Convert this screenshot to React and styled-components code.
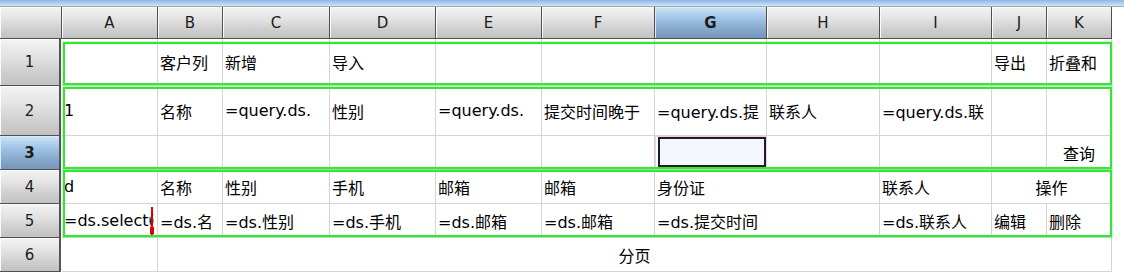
import React from 'react';
import styled, { createGlobalStyle } from 'styled-components';

const GlobalStyle = createGlobalStyle`
  html, body { margin: 0; padding: 0; background: #ffffff; }
  body { font-family: "DejaVu Sans", "Noto Sans CJK SC", sans-serif; }
  *, *::before, *::after { box-sizing: border-box; }
`;

const COLS = [
  { key: 'A', w: 96 },
  { key: 'B', w: 65 },
  { key: 'C', w: 107 },
  { key: 'D', w: 106 },
  { key: 'E', w: 106 },
  { key: 'F', w: 113 },
  { key: 'G', w: 112 },
  { key: 'H', w: 113 },
  { key: 'I', w: 112 },
  { key: 'J', w: 55 },
  { key: 'K', w: 65 },
];

const ROW_HEIGHTS = [47, 50, 34, 34, 34, 34];

const ROWS = [
  [
    { t: '' }, { t: '客户列' }, { t: '新增' }, { t: '导入' }, { t: '' }, { t: '' },
    { t: '' }, { t: '' }, { t: '' }, { t: '导出' }, { t: '折叠和' },
  ],
  [
    { t: '1' }, { t: '名称' }, { t: '=query.ds.' }, { t: '性别' }, { t: '=query.ds.' },
    { t: '提交时间晚于' }, { t: '=query.ds.提' }, { t: '联系人' }, { t: '=query.ds.联' },
    { t: '' }, { t: '' },
  ],
  [
    { t: '' }, { t: '' }, { t: '' }, { t: '' }, { t: '' }, { t: '' },
    { t: '', selected: true }, { t: '' }, { t: '' }, { t: '' }, { t: '查询', align: 'center' },
  ],
  [
    { t: 'd' }, { t: '名称' }, { t: '性别' }, { t: '手机' }, { t: '邮箱' }, { t: '邮箱' },
    { t: '身份证', span: 2 }, { t: '联系人' }, { t: '操作', span: 2, align: 'center' },
  ],
  [
    { t: '=ds.select(', caret: true }, { t: '=ds.名' }, { t: '=ds.性别' }, { t: '=ds.手机' },
    { t: '=ds.邮箱' }, { t: '=ds.邮箱' }, { t: '=ds.提交时间', span: 2 }, { t: '=ds.联系人' },
    { t: '编辑' }, { t: '删除' },
  ],
  [
    { t: '' }, { t: '分页', span: 10, align: 'center' },
  ],
];

const GROUPS = [
  { top: 35, h: 43 },
  { top: 80, h: 82 },
  { top: 163, h: 67 },
];

const TopBar = styled.div`
  height: 7px;
  background: linear-gradient(to bottom, #8db7e2 0%, #a9cbee 45%, #d3e4f5 100%);
  border-bottom: 1px solid #a2a9b1;
`;

const Sheet = styled.div`
  position: relative;
  display: grid;
  width: 1112px;
  grid-template-columns: 62px ${COLS.map((c) => `${c.w}px`).join(' ')};
  grid-template-rows: 32px ${ROW_HEIGHTS.map((h) => `${h}px`).join(' ')};
`;

const grayCol = 'linear-gradient(to bottom, #f4f4f4 0%, #e2e2e2 40%, #cdcdcd 75%, #c2c2c2 100%)';
const blueCol = 'linear-gradient(to bottom, #cde6f9 0%, #a3c5e6 35%, #86a9cd 70%, #7795bb 100%)';

const HeaderCell = styled.div`
  display: flex;
  align-items: center;
  justify-content: center;
  font-family: "DejaVu Sans", sans-serif;
  font-size: 15px;
  color: #1c1c1c;
  font-weight: ${(p) => (p.$active ? 700 : 400)};
  background: ${(p) => (p.$active ? blueCol : grayCol)};
  border-right: 1px solid #505050;
  border-bottom: 1px solid #505050;
  box-shadow: inset 1px 1px 0 ${(p) => (p.$active ? '#d8ecfb' : '#fbfbfb')};
`;

const RowHeader = styled(HeaderCell)`
  border-right: 2px solid #555555;
  margin-right: 1px;
`;

const Cell = styled.div`
  position: relative;
  grid-column: span ${(p) => p.$span || 1};
  display: flex;
  align-items: center;
  justify-content: ${(p) => (p.$align === 'center' ? 'center' : 'flex-start')};
  padding: ${(p) => (p.$selected ? '0 0 1px 1px' : '0 2px')};
  font-size: 16px;
  color: #000000;
  white-space: nowrap;
  overflow: hidden;
  background: #ffffff;
  border-right: 1px solid #d4d4d4;
  border-bottom: 1px solid #d4d4d4;
  ${(p) => (p.$selected ? 'border: 1px solid #f1cdee;' : '')}
`;

const SelectionBox = styled.div`
  flex: 1;
  align-self: stretch;
  margin: 0 0 1px 1px;
  border: 2px solid #1f1f1f;
  background: #f5f7ff;
`;

const GroupOutline = styled.div`
  position: absolute;
  left: 63px;
  width: 1049px;
  top: ${(p) => p.$top}px;
  height: ${(p) => p.$h}px;
  border: 2px solid #35e635;
  box-shadow: 0 0 0 1px rgba(110, 240, 110, 0.35);
  pointer-events: none;
`;

const Caret = styled.svg`
  position: absolute;
  left: 86px;
  top: 3px;
`;

function CaretMark() {
  return (
    <Caret width="7" height="30" viewBox="0 0 7 30">
      <rect x="3" y="0" width="2" height="30" fill="#e20000" />
      <rect x="2" y="20" width="4" height="7" fill="#e20000" />
      <rect x="1" y="10" width="1" height="6" fill="#38c7d6" />
      <rect x="5" y="12" width="1" height="4" fill="#38c7d6" />
    </Caret>
  );
}

export default function App() {
  return (
    <>
      <GlobalStyle />
      <TopBar />
      <Sheet>
        <HeaderCell />
        {COLS.map((c) => (
          <HeaderCell key={c.key} $active={c.key === 'G'}>
            {c.key}
          </HeaderCell>
        ))}
        {ROWS.map((row, ri) => (
          <React.Fragment key={ri}>
            <RowHeader $active={ri === 2}>{ri + 1}</RowHeader>
            {row.map((cell, ci) => (
              <Cell
                key={ci}
                $span={cell.span}
                $align={cell.align}
                $selected={cell.selected}
              >
                {cell.selected ? <SelectionBox /> : cell.t}
                {cell.caret && <CaretMark />}
              </Cell>
            ))}
          </React.Fragment>
        ))}
        {GROUPS.map((g, i) => (
          <GroupOutline key={i} $top={g.top} $h={g.h} />
        ))}
      </Sheet>
    </>
  );
}
